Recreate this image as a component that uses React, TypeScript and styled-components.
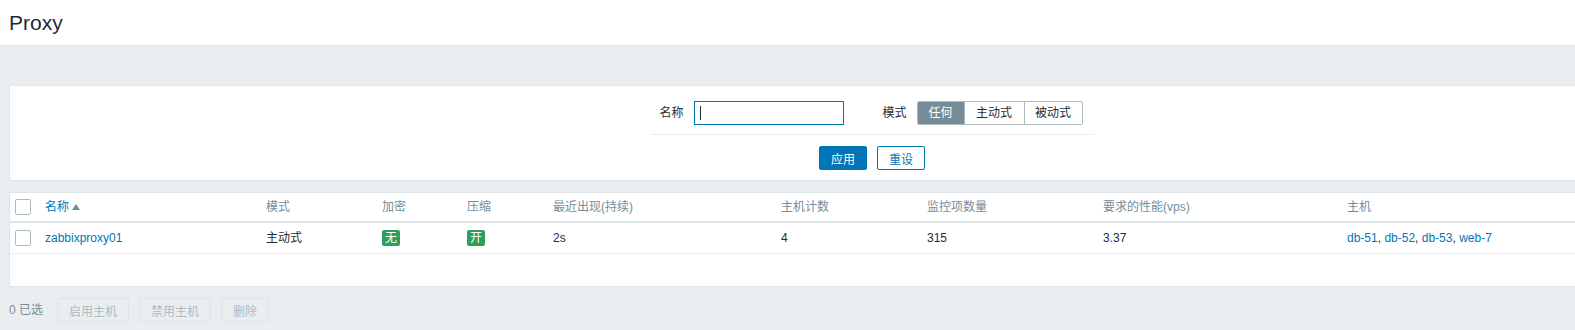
import React from "react";
import styled, { createGlobalStyle } from "styled-components";

const Global = createGlobalStyle`
  html, body { margin: 0; padding: 0; }
  body {
    background: #ebeef0;
    font-family: "Liberation Sans", Arial, "Noto Sans CJK SC", sans-serif;
    font-size: 12px;
    line-height: 14px;
    color: #1f2c33;
    overflow: hidden;
  }
`;

const Page = styled.div`
  width: 1744px;
  min-height: 330px;
  background: #ebeef0;
`;

const Header = styled.header`
  height: 45px;
  background: #fff;
  border-bottom: 1px solid #dfe4e7;
  display: flex;
  align-items: center;
  padding-left: 9px;
`;

const Title = styled.h1`
  margin: 0;
  font-weight: normal;
  font-size: 21px;
  color: #1f2c33;
  line-height: 24px;
`;

const Content = styled.main`
  padding: 39px 9px 0 9px;
`;

const FilterPanel = styled.section`
  background: #fff;
  border: 1px solid #dfe4e7;
  height: 96px;
  box-sizing: border-box;
  display: flex;
  flex-direction: column;
  align-items: center;
  padding-top: 15px;
`;

const FilterRow = styled.div`
  display: flex;
  align-items: center;
  width: 443px;
  padding: 0 0 9px 9px;
  box-sizing: border-box;
  border-bottom: 1px solid #ebeef0;
`;

const Label = styled.label`
  margin-right: 10px;
`;

const Input = styled.div`
  width: 150px;
  height: 24px;
  box-sizing: border-box;
  border: 1px solid #0275b8;
  margin-right: 39px;
  display: flex;
  align-items: center;
  padding-left: 5px;
`;

const Caret = styled.span`
  width: 1px;
  height: 14px;
  background: #1f2c33;
`;

const Segmented = styled.div`
  display: flex;
  height: 24px;
  border: 1px solid #acbbc2;
  border-radius: 2px;
  box-sizing: border-box;
  overflow: hidden;
`;

const Segment = styled.span<{ $active?: boolean; $w: number }>`
  width: ${(p) => p.$w}px;
  box-sizing: border-box;
  display: flex;
  align-items: center;
  justify-content: center;
  background: ${(p) => (p.$active ? "#768d99" : "#fff")};
  color: ${(p) => (p.$active ? "#fff" : "#1f2c33")};
  & + & {
    border-left: 1px solid #acbbc2;
  }
`;

const ButtonRow = styled.div`
  display: flex;
  gap: 10px;
  margin-top: 11px;
`;

const Btn = styled.button<{ $primary?: boolean }>`
  width: 48px;
  height: 24px;
  box-sizing: border-box;
  border-radius: 2px;
  font-family: inherit;
  font-size: 12px;
  padding: 0;
  cursor: pointer;
  border: 1px solid #0275b8;
  background: ${(p) => (p.$primary ? "#0275b8" : "#fff")};
  color: ${(p) => (p.$primary ? "#fff" : "#0275b8")};
`;

const TablePanel = styled.section`
  margin-top: 11px;
  background: #fff;
  border: 1px solid #dfe4e7;
  height: 95px;
  box-sizing: border-box;
`;

const Table = styled.table`
  border-collapse: collapse;
  table-layout: fixed;
  width: 1724px;
`;

const Th = styled.th<{ $w: number }>`
  width: ${(p) => p.$w}px;
  box-sizing: border-box;
  text-align: left;
  font-weight: normal;
  color: #768d99;
  height: 29px;
  padding: 0 5px;
  border-bottom: 2px solid #dfe4e7;
  white-space: nowrap;
  line-height: 14px;
`;

const Td = styled.td`
  height: 30px;
  padding: 0 5px;
  border-bottom: 1px solid #ebeef0;
  white-space: nowrap;
  line-height: 14px;
`;

const Check = styled.span`
  display: block;
  width: 16px;
  height: 16px;
  box-sizing: border-box;
  border: 1px solid #acbbc2;
  border-radius: 2px;
  background: #fff;
`;

const Link = styled.a`
  color: #0275b8;
  text-decoration: none;
`;

const SortArrow = styled.span`
  display: inline-block;
  width: 0;
  height: 0;
  margin-left: 3px;
  border-left: 4px solid transparent;
  border-right: 4px solid transparent;
  border-bottom: 6px solid #768d99;
  vertical-align: 1px;
`;

const Badge = styled.span`
  display: inline-block;
  background: #2e9f5a;
  color: #fff;
  padding: 1px 3px;
  line-height: 14px;
  border-radius: 2px;
`;

const Footer = styled.div`
  display: flex;
  align-items: center;
  margin-top: 11px;
  gap: 10px;
`;

const Selected = styled.span`
  color: #768d99;
  margin-right: 4px;
`;

const Disabled = styled.button<{ $w: number }>`
  width: ${(p) => p.$w}px;
  height: 24px;
  box-sizing: border-box;
  border: 1px solid #dfe4e7;
  border-radius: 2px;
  background: transparent;
  color: #acbbc2;
  font-family: inherit;
  font-size: 12px;
  padding: 0;
`;

export default function App() {
  return (
    <Page>
      <Global />
      <Header>
        <Title>Proxy</Title>
      </Header>
      <Content>
        <FilterPanel>
          <FilterRow>
            <Label>名称</Label>
            <Input>
              <Caret />
            </Input>
            <Label>模式</Label>
            <Segmented>
              <Segment $active $w={46}>任何</Segment>
              <Segment $w={60}>主动式</Segment>
              <Segment $w={58}>被动式</Segment>
            </Segmented>
          </FilterRow>
          <ButtonRow>
            <Btn $primary>应用</Btn>
            <Btn>重设</Btn>
          </ButtonRow>
        </FilterPanel>
        <TablePanel>
          <Table>
            <thead>
              <tr>
                <Th $w={30}>
                  <Check />
                </Th>
                <Th $w={221}>
                  <Link href="#">名称</Link>
                  <SortArrow />
                </Th>
                <Th $w={116}>模式</Th>
                <Th $w={85}>加密</Th>
                <Th $w={86}>压缩</Th>
                <Th $w={228}>最近出现(持续)</Th>
                <Th $w={146}>主机计数</Th>
                <Th $w={176}>监控项数量</Th>
                <Th $w={244}>要求的性能(vps)</Th>
                <Th $w={392}>主机</Th>
              </tr>
            </thead>
            <tbody>
              <tr>
                <Td>
                  <Check />
                </Td>
                <Td>
                  <Link href="#">zabbixproxy01</Link>
                </Td>
                <Td>主动式</Td>
                <Td>
                  <Badge>无</Badge>
                </Td>
                <Td>
                  <Badge>开</Badge>
                </Td>
                <Td>2s</Td>
                <Td>4</Td>
                <Td>315</Td>
                <Td>3.37</Td>
                <Td>
                  <Link href="#">db-51</Link>, <Link href="#">db-52</Link>,{" "}
                  <Link href="#">db-53</Link>, <Link href="#">web-7</Link>
                </Td>
              </tr>
            </tbody>
          </Table>
        </TablePanel>
        <Footer>
          <Selected>0 已选</Selected>
          <Disabled $w={72}>启用主机</Disabled>
          <Disabled $w={72}>禁用主机</Disabled>
          <Disabled $w={48}>删除</Disabled>
        </Footer>
      </Content>
    </Page>
  );
}
